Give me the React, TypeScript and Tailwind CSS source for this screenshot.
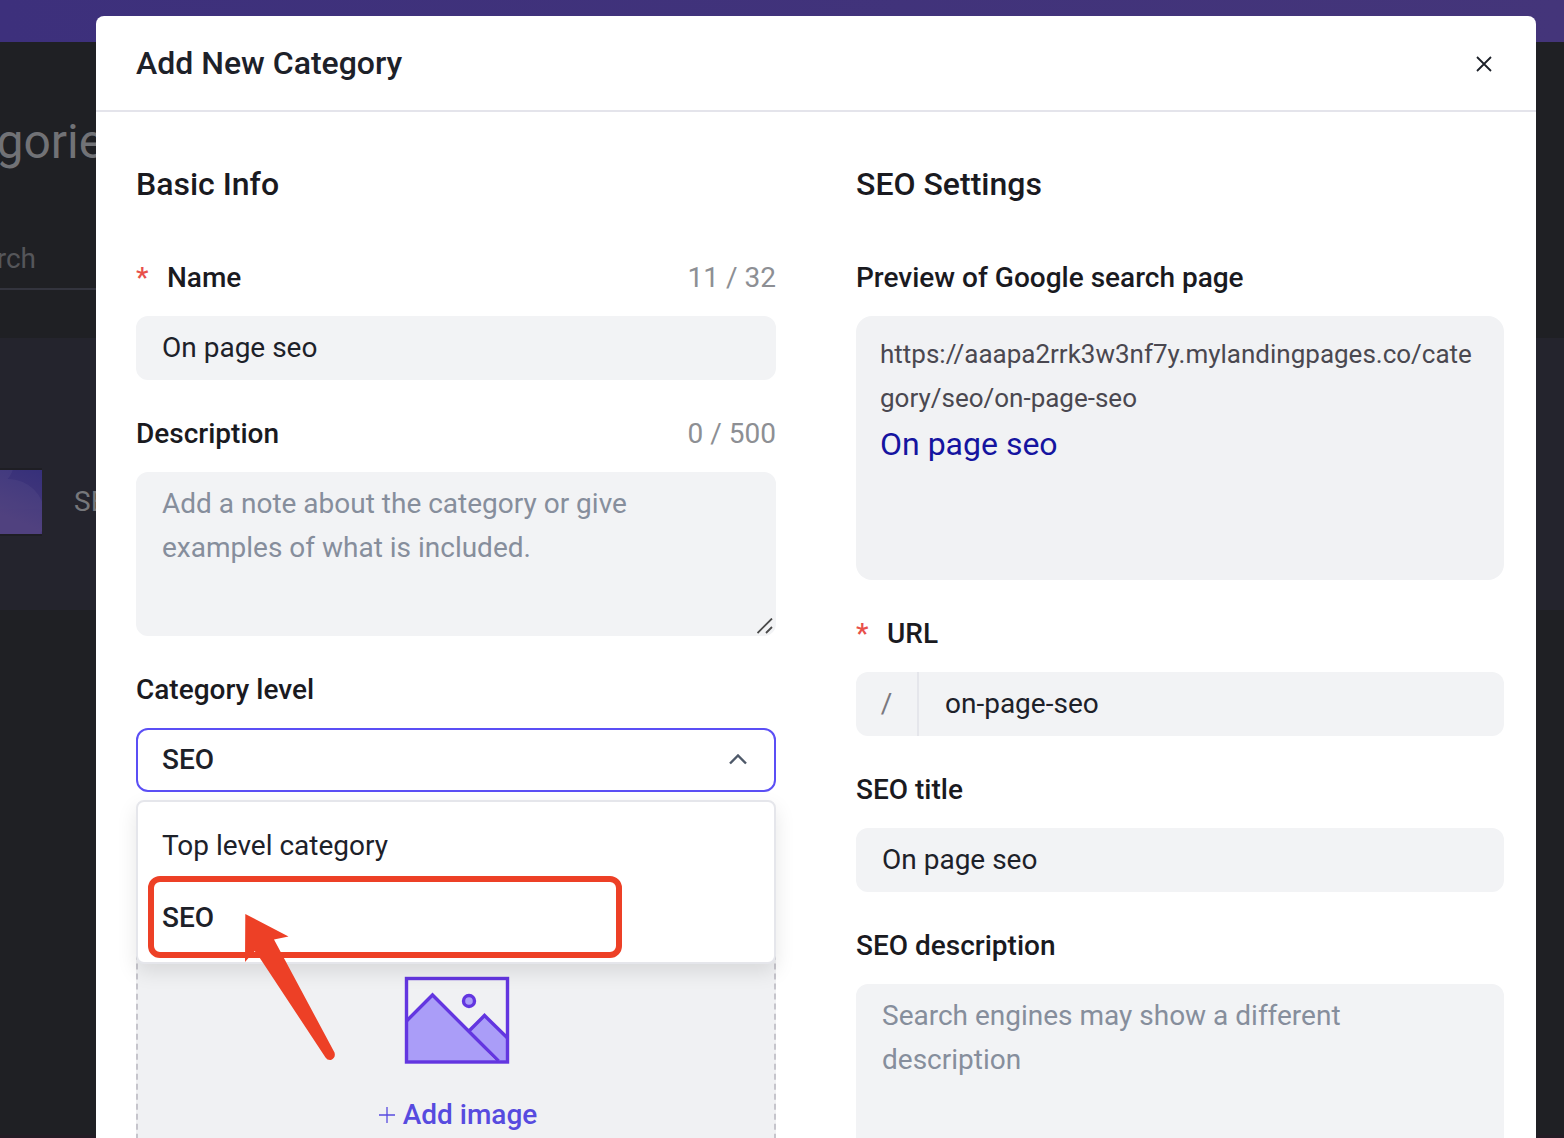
import { useState } from "react";
import type { ReactNode } from "react";

const fieldBox =
  "block w-full rounded-xl border-2 border-[#f2f3f5] bg-[#f2f3f5] px-6 text-[28px] leading-[44px] text-[#1d2129] outline-none placeholder:text-[#868e9c]";

function Field({
  id,
  label,
  required,
  counter,
  children,
}: {
  id: string;
  label: string;
  required?: boolean;
  counter?: string;
  children: ReactNode;
}) {
  return (
    <div className="mt-8 first-of-type:mt-12">
      <div className="mb-4 flex items-center justify-between text-[28px] leading-[44px]">
        <label htmlFor={id} className="flex font-medium text-[#1a1a1f]">
          {required && <span className="w-[31px] text-[#e8504a]">*</span>}
          {label}
        </label>
        {counter && <span className="text-[#8d8f94]">{counter}</span>}
      </div>
      {children}
    </div>
  );
}

function PageBehind() {
  return (
    <div className="flex min-h-screen flex-col bg-[#1f2024]">
      <div className="h-[42px] bg-linear-to-r from-[#3d307c] to-[#44357a]" />
      <div className="flex-1">
        <h1 className="-ml-[102px] pt-16 text-[48px] leading-[72px] text-[#717276]">Categories</h1>
        <div className="mt-12 h-16 w-1/2 border-b-2 border-[#33343e]">
          <div className="-ml-[50px] pt-0.5 text-[28px] leading-[62px] text-[#55565a]">Search</div>
        </div>
        <div className="mt-12 flex h-[272px] items-center bg-[#24242d] pt-[56px]">
          <svg className="-ml-[54px] mr-8 h-[68px] w-24" viewBox="0 0 96 68" aria-hidden="true">
            <defs>
              <linearGradient id="thumb" x1="0.400" y1="1" x2="1" y2="0">
                <stop offset="0.300" stopColor="#493a7a" />
                <stop offset="1" stopColor="#36307a" />
              </linearGradient>
            </defs>
            <rect width="96" height="68" fill="#1e1e24" />
            <rect y="2" width="96" height="64" fill="url(#thumb)" />
            <clipPath id="thumb-clip">
              <rect y="2" width="96" height="64" />
            </clipPath>
            <g clipPath="url(#thumb-clip)" fill="#fff" opacity="0.040">
              <circle cx="42" cy="-6" r="26" />
              <circle cx="62" cy="48" r="37" />
            </g>
          </svg>
          <span className="text-[28px] leading-[44px] text-[#76777b]">SEO</span>
        </div>
      </div>
      <div className="h-[3px] bg-[#231c25]" />
    </div>
  );
}

function Highlight() {
  return (
    <>
      <div className="pointer-events-none absolute left-[10px] top-[74px] h-[82px] w-[474px] rounded-xl border-6 border-[#ed4026]" />
      <svg
        className="pointer-events-none absolute left-[106px] top-[110px] h-[152px] w-[96px]"
        viewBox="0 0 96 152"
        fill="#ed4026"
        aria-hidden="true"
      >
        <path d="M1.300 2L44.500 24.500L30 27.500L90.500 140.500Q92 146 87 148Q83.500 148.500 81.500 145.500L15.500 45.500L10.700 39L1 50Z" />
      </svg>
    </>
  );
}

export default function App() {
  const [name, setName] = useState("On page seo");
  const [slug, setSlug] = useState("on-page-seo");
  const [seoTitle, setSeoTitle] = useState("On page seo");
  const [level, setLevel] = useState("SEO");
  const levels = ["Top level category", "SEO"];

  return (
    <div className="relative h-screen overflow-hidden font-[Roboto,sans-serif]">
      <PageBehind />
      <div className="absolute inset-0 overflow-hidden pl-24 pr-7 pt-4">
        <div role="dialog" aria-labelledby="dialog-title" className="rounded-t-lg bg-white">
          <header className="flex h-24 items-center justify-between border-b-2 border-[#e4e4eb] px-10">
            <h2 id="dialog-title" className="text-[32px] font-medium leading-[48px] text-[#1d2129]">
              Add New Category
            </h2>
            <button type="button" aria-label="Close" className="flex h-[26px] w-6 items-end justify-center pb-1 text-[#1d2129]">
              <svg className="size-4" viewBox="0 0 16 16" stroke="currentColor" strokeWidth="1.800" aria-hidden="true">
                <path d="M1 1L15 15M15 1L1 15" />
              </svg>
            </button>
          </header>

          <form className="grid grid-cols-2">
            <section className="px-10 pt-12">
              <h3 className="text-[32px] font-medium leading-[48px] text-[#1a1a1f]">Basic Info</h3>

              <Field id="name" label="Name" required counter="11 / 32">
                <input id="name" className={`${fieldBox} h-16 pb-0.5`} value={name} onChange={(e) => setName(e.target.value)} />
              </Field>

              <Field id="description" label="Description" counter="0 / 500">
                <div className="relative">
                  <textarea
                    id="description"
                    className={`${fieldBox} h-[164px] resize-none pt-2`}
                    placeholder="Add a note about the category or give examples of what is included."
                  />
                  <svg
                    className="pointer-events-none absolute bottom-0.5 right-[3px] size-4"
                    viewBox="0 0 16 16"
                    stroke="#4a4a4a"
                    strokeWidth="1.800"
                    aria-hidden="true"
                  >
                    <path d="M0.500 15L15 0.500M9 15L15 9" />
                  </svg>
                </div>
              </Field>

              <Field id="level" label="Category level">
                <div className="relative">
                  <select
                    id="level"
                    value={level}
                    onChange={(e) => setLevel(e.target.value)}
                    className="block h-16 w-full appearance-none rounded-xl border-2 border-[#5b4ff5] bg-white px-6 text-[28px] font-medium text-[#1d2129] outline-none"
                  >
                    {levels.map((l) => (
                      <option key={l}>{l}</option>
                    ))}
                  </select>
                  <svg
                    className="pointer-events-none absolute right-7 top-[26px] h-[11px] w-5"
                    viewBox="0 0 20 11"
                    fill="none"
                    stroke="#4e5969"
                    strokeWidth="2.400"
                    aria-hidden="true"
                  >
                    <path d="M2 9.500L10 1.500L18 9.500" />
                  </svg>
                  <div
                    role="listbox"
                    aria-label="Category level"
                    className="absolute inset-x-0 top-[72px] z-10 rounded-lg border-2 border-[#e5e6eb] bg-white py-2 shadow-[0_8px_20px_rgba(0,0,0,0.1)]"
                  >
                    {levels.map((l) => (
                      <button
                        key={l}
                        type="button"
                        role="option"
                        aria-selected={l === level}
                        onClick={() => setLevel(l)}
                        className="block h-[72px] w-full px-6 text-left text-[28px] text-[#1d2129] aria-selected:font-medium"
                      >
                        {l}
                      </button>
                    ))}
                    <Highlight />
                  </div>
                </div>
              </Field>

              <button
                type="button"
                className="mt-[92px] flex h-[320px] w-full flex-col items-center rounded-xl border-2 border-dashed border-[#c6c5cc] bg-[#f0f1f3] pl-0.5 pt-[90px]"
              >
                <svg className="h-[88px] w-[106px]" viewBox="0 0 106 88" stroke="#6336e0" strokeWidth="3.400" aria-hidden="true">
                  <path d="M2.500 44L28.500 18L92 85.500H2.500Z" fill="#aa9df8" stroke="none" />
                  <path d="M65 54L80.500 38.500L103.500 61V85.500H94Z" fill="#aa9df8" stroke="none" />
                  <path d="M2.500 45L28.500 19L94.500 85M65 55L80.500 39.500L103.500 62" fill="none" />
                  <circle cx="65" cy="25" r="5.500" fill="#aa9df8" />
                  <rect x="2.500" y="2.500" width="101" height="83.500" fill="none" />
                </svg>
                <span className="mt-[29px] flex items-center gap-2 pl-0.5 text-[28px] font-medium leading-[44px] text-[#574bdf]">
                  <svg className="size-4" viewBox="0 0 16 16" stroke="currentColor" strokeWidth="1.300" aria-hidden="true">
                    <path d="M8 0V16M0 8H16" />
                  </svg>
                  Add image
                </span>
              </button>
            </section>

            <section className="pl-10 pr-8 pt-12">
              <h3 className="text-[32px] font-medium leading-[48px] text-[#1a1a1f]">SEO Settings</h3>

              <div className="mt-12">
                <h4 className="mb-4 text-[28px] font-medium leading-[44px] text-[#1a1a1f]">
                  Preview of Google search page
                </h4>
                <div className="h-[264px] rounded-2xl bg-[#f1f2f4] px-6 pt-4">
                  <p className="break-all text-[26px] leading-[44px] text-[#4a4850]">
                    https://aaapa2rrk3w3nf7y.mylandingpages.co/category/seo/on-page-seo
                  </p>
                  <p className="text-[32px] leading-[48px] text-[#1514a0]">On page seo</p>
                </div>
              </div>

              <Field id="url" label="URL" required>
                <div className="flex h-16 rounded-xl bg-[#f2f3f5]">
                  <span className="flex w-[63px] items-center justify-center border-r-2 border-[#e5e6eb] text-[28px] text-[#7a787e]">
                    /
                  </span>
                  <input
                    id="url"
                    className="min-w-0 flex-1 rounded-r-xl bg-transparent px-[26px] text-[28px] text-[#1d2129] outline-none"
                    value={slug}
                    onChange={(e) => setSlug(e.target.value)}
                  />
                </div>
              </Field>

              <Field id="seo-title" label="SEO title">
                <input
                  id="seo-title"
                  className={`${fieldBox} h-16 pb-0.5`}
                  value={seoTitle}
                  onChange={(e) => setSeoTitle(e.target.value)}
                />
              </Field>

              <Field id="seo-description" label="SEO description">
                <textarea
                  id="seo-description"
                  className={`${fieldBox} h-[220px] resize-none pt-2`}
                  placeholder="Search engines may show a different description"
                />
              </Field>
            </section>
          </form>
        </div>
      </div>
    </div>
  );
}
